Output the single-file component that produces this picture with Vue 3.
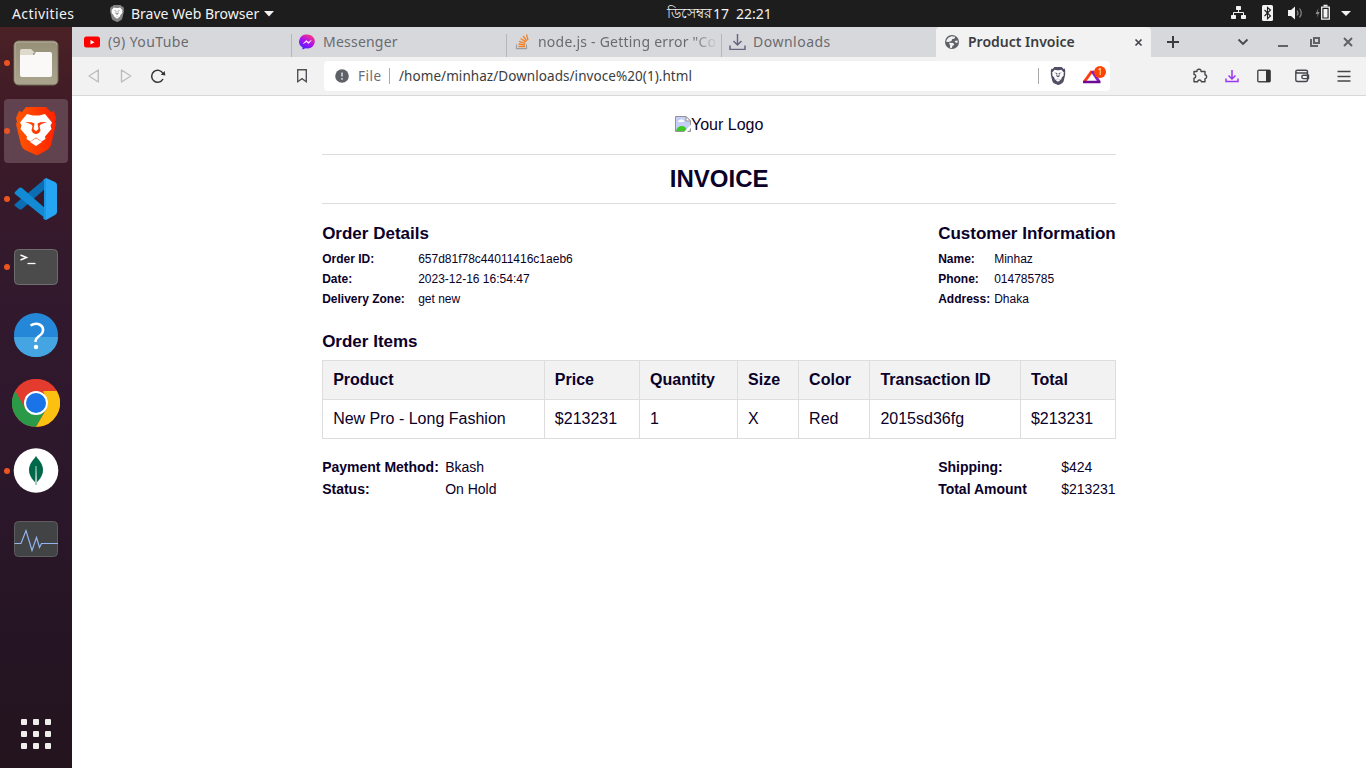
<script setup>
const tabs = [
  { id: 'yt', label: '(9) YouTube' },
  { id: 'ms', label: 'Messenger' },
  { id: 'so', label: 'node.js - Getting error "Co' },
  { id: 'dl', label: 'Downloads' },
]
const order = [
  ['Order ID:', '657d81f78c44011416c1aeb6'],
  ['Date:', '2023-12-16 16:54:47'],
  ['Delivery Zone:', 'get new'],
]
const customer = [
  ['Name:', 'Minhaz'],
  ['Phone:', '014785785'],
  ['Address:', 'Dhaka'],
]
const heads = ['Product', 'Price', 'Quantity', 'Size', 'Color', 'Transaction ID', 'Total']
const cells = ['New Pro - Long Fashion', '$213231', '1', 'X', 'Red', '2015sd36fg', '$213231']
const payment = [
  ['Payment Method:', 'Bkash'],
  ['Status:', 'On Hold'],
]
const totals = [
  ['Shipping:', '$424'],
  ['Total Amount', '$213231'],
]
</script>

<template>
  <div class="desktop">
    <svg width="0" height="0" class="defs">
      <defs>
        <linearGradient id="gBrave" x1="0" x2="1"><stop offset="0" stop-color="#ff5500" /><stop offset=".45" stop-color="#ff4000" /><stop offset="1" stop-color="#ff2000" /></linearGradient>
        <linearGradient id="gMsg" x1=".2" y1="1" x2=".8" y2="0"><stop offset="0" stop-color="#3a22ff" /><stop offset=".5" stop-color="#b010f0" /><stop offset="1" stop-color="#ff3b70" /></linearGradient>
        <linearGradient id="gFile" x1="0" y1="0" x2="0" y2="1"><stop offset="0" stop-color="#979079" /><stop offset="1" stop-color="#aaa48e" /></linearGradient>
        <symbol id="lion" viewBox="0 0 40 48">
          <path d="M10 0h20l5 5 3-1 2 7-1 4 1 2-5 21q-1 3-4 5l-9 5-2 0-11-5q-3-2-4-5L0 17l1-2-1-4 3-7 3 1z" />
        </symbol>
        <symbol id="face" viewBox="0 0 40 48">
          <path fill-rule="evenodd" d="M11 7l6 1.500h6L29 7l7 8.500-1.500 3L35.500 22l-6.500 7.500.5 2.500-4 2.500-5.500-4-5.500 4-4-2.500.5-2.500L4.500 22l1-3.500-1.500-3zM9 15l6 2.200 1.500 1.800-1 4.500 1.500 2.500 3 1.300 3-1.300 1.500-2.500-1-4.500 1.500-1.800L31 15l-6.500.2-3 1.300 1 5.500-2.500 2.300L17.500 22l1-5.500-3-1.300z" />
          <path d="M14 35l6-3.700 6 3.700-6 4z" />
        </symbol>
      </defs>
    </svg>

    <header class="topbar">
      <span class="activities">Activities</span>
      <svg class="mini-lion" width="14" height="17" viewBox="0 0 40 48"><use href="#lion" fill="#858585" /><use href="#face" fill="#fff" /></svg>
      <span class="appname">Brave Web Browser</span>
      <svg class="caret" width="10" height="6"><path d="M0 0h10L5 5.5z" fill="#f2f2f2" /></svg>
      <div class="clock"><span class="bn">ডিসেম্বর</span><span class="num">17</span><span class="num">22:21</span></div>
      <svg class="tray" width="130" height="27" viewBox="1230 0 130 27" fill="#f2f2f2">
        <rect x="1236" y="6" width="5" height="4" rx=".7" /><rect x="1231" y="15" width="5" height="4" rx=".7" /><rect x="1241" y="15" width="5" height="4" rx=".7" />
        <path d="M1238.500 10v3M1233.500 15v-2.500h10V15" fill="none" stroke="#f2f2f2" />
        <rect x="1262" y="5" width="11" height="16" rx="1.500" />
        <path d="M1264.500 10l6 6-3 2.700V7.500l3 2.500-6 6" fill="none" stroke="#1d1d1d" stroke-width="1.100" />
        <path d="M1288 10h3l4-3.500v13l-4-3.500h-3z" />
        <path d="M1297 10.500q2 2.500 0 5M1299.500 8.500q3.500 4.500 0 9" fill="none" stroke="#888" stroke-width="1.200" />
        <path d="M1318.500 8l-3 6h2.200l-1 4 3-6h-2z" fill="#8a8a8a" />
        <path d="M1321.700 7.200h7.600v12h-7.600zM1323.500 5.500h4" fill="none" stroke="#f2f2f2" stroke-width="1.300" /><rect x="1323.500" y="9" width="4" height="8.500" />
        <path d="M1341 11h10l-5 5z" />
      </svg>
    </header>

    <div class="below">
      <nav class="dock">
        <div class="slot run">
          <svg width="46" height="46" viewBox="0 0 46 46"><rect x="1" y="1" width="44" height="44" rx="4.500" fill="url(#gFile)" stroke="#706b59" /><path d="M2 41V5q0-3 3-3h36q3 0 3 3" fill="none" stroke="#b5b09c" /><path d="M7 14v-3q0-2 2-2h9l4 4h-2v4H7z" fill="#dedacb" /><path d="M7 15h14l2-3h14q2 0 2 2v21q0 2-2 2H9q-2 0-2-2z" fill="#faf9f7" /></svg>
        </div>
        <div class="slot run active">
          <svg width="40" height="48" viewBox="0 0 40 48"><use href="#lion" fill="url(#gBrave)" /><use href="#face" fill="#fff" /></svg>
        </div>
        <div class="slot run">
          <svg width="44" height="44" viewBox="0 0 44 44"><path d="M1 29l4 3q1 1 3 0l24-21V1L1 27q-1 1 0 2z" fill="#0b6db4" /><path d="M1 15l4-4q1-1 3 0l24 21v10L1 17q-1-1 0-2z" fill="#128bd4" /><path d="M32 1l9 4q2 1 2 3v27q0 2-2 3l-9 5z" fill="#27a5f5" /><path d="M32 1v42q-2 0-3-2l1-1V4l-1-1z" fill="#1b96e3" /></svg>
        </div>
        <div class="slot run">
          <svg width="46" height="38" viewBox="0 0 46 38"><rect x="1.500" y="1.500" width="43" height="35" rx="4" fill="#4b4b4b" stroke="#6e6e6e" /><path d="M7.500 7l6 2.500-6 2.500" fill="none" stroke="#fff" stroke-width="1.400" /><path d="M14.500 15.500h8" stroke="#fff" stroke-width="1.300" /></svg>
        </div>
        <div class="slot">
          <svg width="46" height="46" viewBox="0 0 46 46"><circle cx="23" cy="23" r="22" fill="#2487d8" /><path d="M1 25a22 20 0 0 0 44 0z" fill="#45a5e3" /><path d="M17.500 13.500q5-3 9-1 5 2.500 3 8-1 2-4 4-3 2.200-3 5.500" fill="none" stroke="#fff" stroke-width="2.600" /><circle cx="23" cy="35" r="2.200" fill="#fff" /></svg>
        </div>
        <div class="slot">
          <svg width="48" height="48" viewBox="0 0 48 48"><circle cx="24" cy="24" r="24" fill="#e33b2e" /><path d="M3.200 12A24 24 0 0 0 24 48L34.400 30H24z" fill="#2b9a48" /><path d="M44.800 12A24 24 0 0 1 24 48L34.400 30 36 24 31 12z" fill="#fcc010" /><path d="M3.200 12L13.600 30 24 36l10.400-6L24 12z" fill="#2b9a48" /><path d="M3.200 12A24 24 0 0 1 44.800 12H24L13.600 30z" fill="#e33b2e" /><circle cx="24" cy="24" r="12" fill="#fff" /><circle cx="24" cy="24" r="10" fill="#1a73e8" /></svg>
        </div>
        <div class="slot run">
          <svg width="46" height="46" viewBox="0 0 46 46"><circle cx="23" cy="22.500" r="22.300" fill="#fff" /><path d="M23 8q1 2 3 4 8 10 0 20l-3 3-3-3q-8-10 0-20 2-2 3-4z" fill="#00684a" /><path d="M22.500 18h1l.7 19h-2.200z" fill="#a8ccbc" /></svg>
        </div>
        <div class="slot">
          <svg width="46" height="38" viewBox="0 0 46 38"><rect x="1.500" y="1.500" width="43" height="35" rx="4" fill="#414345" stroke="#5e5e60" /><path d="M1.500 23.500H8l5-13 6 20 4.500-13 3 10 2-4H45" fill="none" stroke="#94b3ef" stroke-width="1.200" /></svg>
        </div>
        <div class="apps"><i v-for="n in 9" :key="n"></i></div>
      </nav>

      <main class="browser">
        <div class="tabs">
          <div v-for="t in tabs" :key="t.id" class="tab" :class="t.id">
            <svg v-if="t.id === 'yt'" width="16" height="16"><rect y="2.500" width="16" height="11" rx="2.500" fill="#f00" /><path d="M6.500 6v4.500l4-2.250z" fill="#fff" /></svg>
            <svg v-else-if="t.id === 'ms'" width="16" height="16"><path d="M8.500.5a7.300 7 0 0 1 0 14l-2-.2-3 1.200v-2.200A7.300 7 0 0 1 8.500.5z" fill="url(#gMsg)" /><path d="M4.300 9.600l3-3.200 2 1.800 3-1.800-2.800 3.200-2-1.800z" fill="#fff" stroke="#fff" stroke-width=".5" /></svg>
            <svg v-else-if="t.id === 'so'" width="16" height="16" fill="none"><path d="M1.500 10.500v4.200h10v-4.200" stroke="#9b9da1" stroke-width="1.200" /><path d="M3.500 12.500H10M3.500 10l6.500.9M4 7.300l6.300 2M5.500 4.500L11 7.900M8 2l4 5M11.500.5L13 6" stroke="#f48024" stroke-width="1.300" /></svg>
            <svg v-else width="17" height="16" fill="none" stroke="#6b6382" stroke-width="1.500"><path d="M8.500 0v10.500M4.500 7l4 4 4-4M1 11.500v4h15v-4" /></svg>
            <span>{{ t.label }}</span>
          </div>
          <div class="tab current">
            <svg width="16" height="16" viewBox="0 0 16 16"><circle cx="8" cy="8" r="7" fill="#5f6168" /><path d="M7.500 2.200l3.800.6-1 2-2 .2-.8 2-3 1-2.300-.3.5-2 2-2.200zM5 8.700l4.300.2 1 2-1.800.8-.6 2.300-2-.3.200-2.200zM10.500 7l3-.5.2 2-1.700.5z" fill="#f2f2f2" /></svg>
            <span>Product Invoice</span>
            <svg class="x" width="9" height="9"><path d="M1.500 1.500l6 6M7.500 1.500l-6 6" stroke="#45474c" stroke-width="1.700" /></svg>
          </div>
          <svg class="winctl" width="215" height="30" viewBox="1151 27 215 30" fill="none" stroke="#606268" stroke-width="2">
            <path d="M1167 42h12M1173 36v12" stroke="#3b3c40" />
            <path d="M1238.500 39.500l4.500 4.500 4.500-4.500" stroke="#45474c" stroke-width="1.800" />
            <path d="M1278 46h10" />
            <path d="M1314 38h5v5h-5zM1311 39v7h7" />
            <path d="M1344 38l8 8M1352 38l-8 8" />
          </svg>
        </div>

        <div class="toolbar">
          <svg class="nav" width="240" height="38" viewBox="72 57 240 38" fill="none" stroke="#bdbdbf" stroke-width="1.400">
            <path d="M98.300 70v12l-9.300-6zM121.500 70v12l9.300-6z" stroke-linejoin="round" />
            <path d="M163 73.500A6 6 0 1 0 163 79" stroke="#333" stroke-width="1.500" /><path d="M160.800 74.800l4.500.8-.6-4.600z" fill="#333" stroke="none" />
            <path d="M297.700 69.700h8.600v12l-4.300-3-4.300 3z" stroke="#515257" />
          </svg>
          <div class="address">
            <svg width="14" height="14"><circle cx="7" cy="7" r="6.800" fill="#5f6168" /><path d="M6.200 3.500h1.600v4H6.200zM6.200 9h1.600v1.700H6.200z" fill="#d5d5d7" /></svg>
            <span class="scheme">File</span><i class="bar"></i>
            <span class="url">/home/minhaz/Downloads/invoce%20(1).html</span>
            <i class="bar end"></i>
            <svg class="shield" width="16" height="18" viewBox="0 0 40 48"><use href="#lion" fill="#514e66" /><use href="#face" fill="#fff" /></svg>
            <svg class="bat" width="24" height="20" viewBox="0 0 24 20" fill="none"><path d="M10 5L2.500 15.500" stroke="#ff3b12" stroke-width="3" /><path d="M10 5l7 10.500" stroke="#8a1cc0" stroke-width="3" /><path d="M1 16h17.500" stroke="#6b0c92" stroke-width="2.500" /><circle cx="18" cy="6" r="6" fill="#ff4105" /><text x="18" y="9" text-anchor="middle" fill="#fff" class="badge">1</text></svg>
          </div>
          <svg class="acts" width="190" height="38" viewBox="1176 57 190 38" fill="none" stroke="#45474c" stroke-width="1.400">
            <path stroke-linejoin="round" d="M1194 71.500h3q-.5-2.200 2-2.200t2 2.200h4v3.300q1.700.3 1.700 2t-1.700 2v3h-3.500q-.5-1.800-2-1.800t-2 1.800h-3.500v-3.600q1.800-.3 1.800-1.900t-1.800-1.900z" />
            <path d="M1232 70v8.500M1228.500 75.500l3.500 3.500 3.500-3.500M1226 78.500v3h12v-3" stroke="#9b35f0" stroke-width="1.500" />
            <rect x="1257.800" y="70.200" width="12.400" height="11.600" rx="1" /><path d="M1266 70h4v12h-4z" fill="#333" stroke="none" />
            <path d="M1308 73h-10.500q-1.700 0-1.700-1.500 0-1.300 1.700-1.300h8.500q1.500 0 1.500 1.300v8.500q0 1.500-1.500 1.500h-8.500q-1.700 0-1.700-1.500v-8.500M1308.500 75.200h-5q-1.700 0-1.700 1.700t1.700 1.700h5z" />
            <path d="M1337.500 71.500h13M1337.500 76.500h13M1337.500 81h13" />
          </svg>
        </div>

        <section class="page">
          <article class="invoice">
            <div class="logo">
              <svg width="16" height="16"><path d="M.5.500h10.500l4.500 4.500v10.500H.5z" fill="#c5cef7" stroke="#949494" /><path d="M3 6q0-2 2-2 1-1.500 3 0 1.500.3 1 2z" fill="#fff" /><path d="M1 15q1-5 6-5 4 0 5 5z" fill="#42c72a" /><path d="M16 8.500L9 16h3l4-4z" fill="#fff" /><path d="M11 .5V5h4.500z" fill="#fff" stroke="#949494" /></svg><span>Your Logo</span>
            </div>
            <h1>INVOICE</h1>
            <div class="split details">
              <div class="left">
                <h2>Order Details</h2>
                <dl><template v-for="r in order" :key="r[0]"><dt>{{ r[0] }}</dt><dd>{{ r[1] }}</dd></template></dl>
              </div>
              <div class="right">
                <h2>Customer Information</h2>
                <dl><template v-for="r in customer" :key="r[0]"><dt>{{ r[0] }}</dt><dd>{{ r[1] }}</dd></template></dl>
              </div>
            </div>
            <h2 class="items">Order Items</h2>
            <table>
              <colgroup><col class="c1" /><col class="c2" /><col class="c3" /><col class="c4" /><col class="c5" /><col class="c6" /><col class="c7" /></colgroup>
              <thead><tr><th v-for="h in heads" :key="h">{{ h }}</th></tr></thead>
              <tbody><tr><td v-for="(c, i) in cells" :key="i">{{ c }}</td></tr></tbody>
            </table>
            <div class="split summary">
              <dl class="pay"><template v-for="r in payment" :key="r[0]"><dt>{{ r[0] }}</dt><dd>{{ r[1] }}</dd></template></dl>
              <dl class="tot"><template v-for="r in totals" :key="r[0]"><dt>{{ r[0] }}</dt><dd>{{ r[1] }}</dd></template></dl>
            </div>
          </article>
        </section>
      </main>
    </div>
  </div>
</template>

<style>
body { margin: 0; overflow: hidden; }
</style>

<style scoped>
* { box-sizing: border-box; }
.desktop { width: 1366px; height: 768px; display: flex; flex-direction: column; overflow: hidden; font-family: "Noto Sans", "Open Sans", sans-serif; font-size: 14px; position: relative; }
.defs { position: absolute; }
svg { display: block; flex: none; }
.topbar { height: 27px; flex: none; background: #1d1d1d; color: #f2f2f2; display: flex; align-items: center; position: relative; white-space: nowrap; }
.activities { margin-left: 12px; width: 98px; letter-spacing: .4px; }
.appname { margin-left: 7px; width: 133px; letter-spacing: 0; }
.clock { position: absolute; left: 667px; display: flex; height: 27px; align-items: center; }
.bn { width: 46px; font-size: 13.5px; padding-top: 1px; }
.num + .num { margin-left: 7px; }
.tray { margin-left: auto; margin-right: 6px; }
.below { flex: 1; display: flex; min-height: 0; }
.dock { width: 72px; flex: none; background: linear-gradient(#4a2125 0, #3d1a27 14%, #33192c 30%, #2f182d 50%, #261525 80%, #23141e 100%); display: flex; flex-direction: column; align-items: center; padding-top: 4px; gap: 4px; }
.slot { width: 64px; height: 64px; border-radius: 4px; display: flex; align-items: center; justify-content: center; position: relative; }
.active { background: #60434f; }
.run::before { content: ""; position: absolute; left: 0; top: 29px; width: 6px; height: 6px; border-radius: 50%; background: #e95420; }
.apps { margin-top: auto; margin-bottom: 19px; display: grid; grid-template-columns: repeat(3, 6px); gap: 6px; }
.apps i { width: 6px; height: 6px; border-radius: 1px; background: #f0eeec; }
.browser { flex: 1; display: flex; flex-direction: column; background: #fff; min-width: 0; }
.tabs { height: 30px; background: #d7d8dc; display: flex; flex: none; }
.tab { position: relative; height: 30px; display: flex; align-items: center; color: #6a6b70; white-space: nowrap; flex: none; }
.tab span { padding-bottom: 2px; }
.tab:not(.current)::after { content: ""; position: absolute; right: 0; bottom: 0; width: 1px; height: 23px; background: #b5b6bb; }
.tab.dl::after { display: none; }
.yt { width: 220px; padding-left: 12px; gap: 8px; letter-spacing: .4px; }
.ms { width: 215px; padding-left: 7px; gap: 8px; letter-spacing: .22px; }
.so { width: 215px; padding-left: 8px; gap: 7px; letter-spacing: .22px; }
.so span { -webkit-mask-image: linear-gradient(90deg, #000 155px, rgba(0, 0, 0, .15) 176px); mask-image: linear-gradient(90deg, #000 155px, rgba(0, 0, 0, .15) 176px); }
.dl { width: 214px; padding-left: 7px; gap: 7px; letter-spacing: .5px; }
.current { width: 215px; background: #f2f2f2; color: #3b3c40; font-weight: 600; padding-left: 8px; gap: 8px; border-radius: 4px 4px 0 0; }
.current .x { margin-left: auto; margin-right: 8px; }
.toolbar { height: 39px; flex: none; background: #f2f2f2; border-bottom: 1px solid #d8d8da; display: flex; align-items: center; }
.address { margin-left: 12px; width: 786px; height: 30px; border-radius: 4px; background: #fff; display: flex; align-items: center; padding-left: 11px; white-space: nowrap; color: #3b3c40; font-size: 13.5px; }
.scheme { margin-left: 9px; width: 31px; color: #6a6b70; letter-spacing: .5px; }
.bar { width: 1px; height: 16px; background: #a8a9ad; flex: none; }
.url { margin-left: 9px; letter-spacing: .06px; }
.end { margin-left: auto; }
.shield { margin-left: 11px; }
.bat { margin-left: 16px; margin-right: 4px; }
.badge { font-size: 8px; }
.acts { margin-left: auto; }
.page { flex: 1; padding-top: 20px; color: #0a0028; font-family: "Liberation Sans", Arial, sans-serif; }
.invoice { width: 794px; margin-left: 250.150px; }
.logo { display: flex; justify-content: center; height: 38px; font-size: 16px; line-height: 18px; }
h1 { margin: 0 0 20px; height: 50px; line-height: 48px; border-top: 1px solid #ddd; border-bottom: 1px solid #ddd; text-align: center; font-size: 24px; }
h2 { margin: 0; font-size: 17px; line-height: 20px; white-space: nowrap; }
.split { display: flex; justify-content: space-between; }
dl { margin: 0; display: grid; font-size: 12px; line-height: 20px; }
dt { font-weight: bold; white-space: nowrap; }
dd { margin: 0; }
.left, .right { height: 108px; }
.left dl, .right dl { margin-top: 5px; }
.left dl { grid-template-columns: 96px auto; }
.right { width: 178px; }
.right dl { grid-template-columns: 56px auto; }
.items { margin-bottom: 8px; }
table { width: 794px; border-collapse: collapse; table-layout: fixed; font-size: 16px; }
th, td { border: 1px solid #ddd; height: 39px; padding: 0 10px; text-align: left; white-space: nowrap; }
th { background: #f2f2f2; }
.c1 { width: 221.700px; } .c2 { width: 95.200px; } .c3 { width: 98.100px; } .c4 { width: 61px; } .c5 { width: 71.300px; } .c6 { width: 150.500px; } .c7 { width: 95.200px; }
.summary { margin-top: 17px; }
.summary dl { font-size: 14px; line-height: 22px; }
.pay { grid-template-columns: 123px auto; }
.tot { width: 178px; grid-template-columns: 123px auto; }
</style>
